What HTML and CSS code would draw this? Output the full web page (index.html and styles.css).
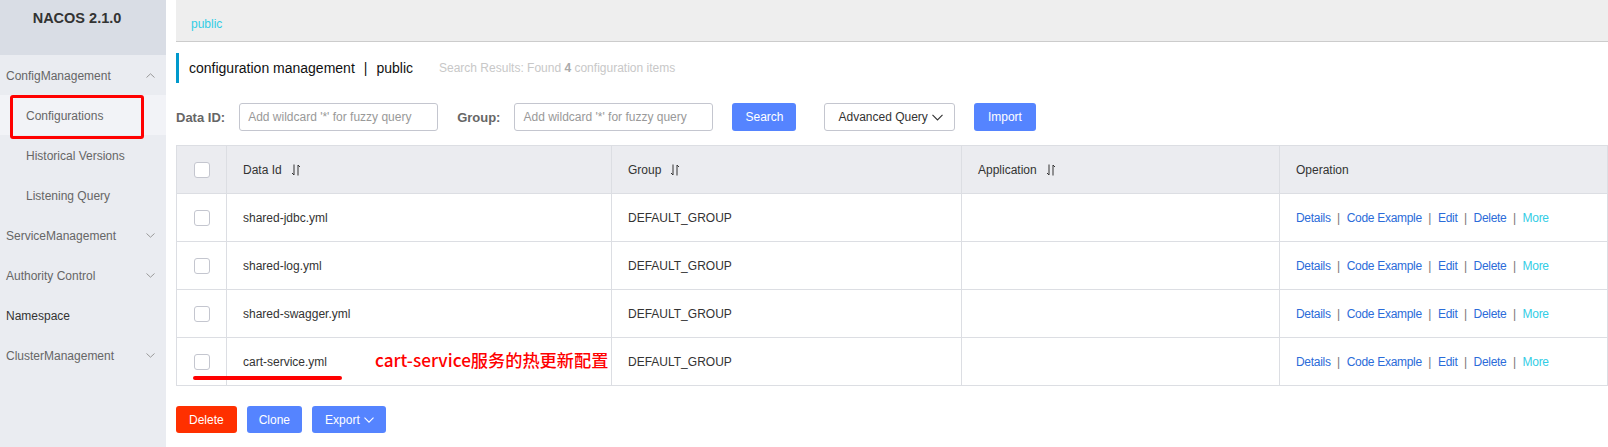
FILE: index.html
```html
<!DOCTYPE html>
<html lang="en">
<head>
<meta charset="utf-8">
<title>Nacos - Configurations</title>
<link rel="stylesheet" href="styles.css">
</head>
<body>
<div class="app">
  <aside class="sidebar">
    <div class="brand">NACOS 2.1.0</div>
    <nav class="menu">
      <div class="menu-row">
        <span>ConfigManagement</span>
        <svg class="chev" width="9" height="5" viewBox="0 0 9 5"><path d="M0.5 4.5 L4.5 0.8 L8.5 4.5" fill="none" stroke="#999" stroke-width="1"/></svg>
      </div>
      <div class="menu-row menu-sub active"><span>Configurations</span></div>
      <div class="menu-row menu-sub"><span>Historical Versions</span></div>
      <div class="menu-row menu-sub"><span>Listening Query</span></div>
      <div class="menu-row">
        <span>ServiceManagement</span>
        <svg class="chev" width="9" height="5" viewBox="0 0 9 5"><path d="M0.5 0.5 L4.5 4.2 L8.5 0.5" fill="none" stroke="#999" stroke-width="1"/></svg>
      </div>
      <div class="menu-row">
        <span>Authority Control</span>
        <svg class="chev" width="9" height="5" viewBox="0 0 9 5"><path d="M0.5 0.5 L4.5 4.2 L8.5 0.5" fill="none" stroke="#999" stroke-width="1"/></svg>
      </div>
      <div class="menu-row menu-link"><span>Namespace</span></div>
      <div class="menu-row">
        <span>ClusterManagement</span>
        <svg class="chev" width="9" height="5" viewBox="0 0 9 5"><path d="M0.5 0.5 L4.5 4.2 L8.5 0.5" fill="none" stroke="#999" stroke-width="1"/></svg>
      </div>
    </nav>
  </aside>

  <main class="main">
    <div class="topbar"><a href="#" class="ns-link">public</a></div>

    <div class="title-row">
      <h1 class="title">configuration management<span class="title-sep">|</span>public</h1>
      <span class="result">Search Results: Found <b>4</b> configuration items</span>
    </div>

    <form class="filters">
      <div class="field">
        <label class="field-label">Data ID:</label>
        <input class="field-input" type="text" placeholder="Add wildcard '*' for fuzzy query">
      </div>
      <div class="field">
        <label class="field-label">Group:</label>
        <input class="field-input" type="text" placeholder="Add wildcard '*' for fuzzy query">
      </div>
      <button type="button" class="btn btn-primary btn-search">Search</button>
      <button type="button" class="btn btn-normal btn-adv">Advanced Query
        <svg class="btn-chev" width="11" height="7" viewBox="0 0 11 7"><path d="M0.5 0.8 L5.5 6 L10.5 0.8" fill="none" stroke="#333" stroke-width="1.1"/></svg>
      </button>
      <button type="button" class="btn btn-primary btn-import">Import</button>
    </form>

    <table class="grid">
      <colgroup>
        <col class="c-check"><col class="c-id"><col class="c-group"><col class="c-app"><col>
      </colgroup>
      <thead>
        <tr>
          <th class="cell-check"><span class="checkbox"></span></th>
          <th>Data Id<svg class="sort" width="10" height="12" viewBox="0 0 10 12"><path d="M3 0.5 V11 L1 9" fill="none" stroke="#333" stroke-width="1"/><path d="M7 11.5 V1 L9 3" fill="none" stroke="#333" stroke-width="1"/></svg></th>
          <th>Group<svg class="sort" width="10" height="12" viewBox="0 0 10 12"><path d="M3 0.5 V11 L1 9" fill="none" stroke="#333" stroke-width="1"/><path d="M7 11.5 V1 L9 3" fill="none" stroke="#333" stroke-width="1"/></svg></th>
          <th>Application<svg class="sort" width="10" height="12" viewBox="0 0 10 12"><path d="M3 0.5 V11 L1 9" fill="none" stroke="#333" stroke-width="1"/><path d="M7 11.5 V1 L9 3" fill="none" stroke="#333" stroke-width="1"/></svg></th>
          <th>Operation</th>
        </tr>
      </thead>
      <tbody>
        <tr>
          <td class="cell-check"><span class="checkbox"></span></td>
          <td>shared-jdbc.yml</td>
          <td>DEFAULT_GROUP</td>
          <td></td>
          <td class="ops"><a href="#">Details</a><span class="op-sep">|</span><a href="#">Code Example</a><span class="op-sep">|</span><a href="#">Edit</a><span class="op-sep">|</span><a href="#">Delete</a><span class="op-sep">|</span><a href="#" class="more">More</a></td>
        </tr>
        <tr>
          <td class="cell-check"><span class="checkbox"></span></td>
          <td>shared-log.yml</td>
          <td>DEFAULT_GROUP</td>
          <td></td>
          <td class="ops"><a href="#">Details</a><span class="op-sep">|</span><a href="#">Code Example</a><span class="op-sep">|</span><a href="#">Edit</a><span class="op-sep">|</span><a href="#">Delete</a><span class="op-sep">|</span><a href="#" class="more">More</a></td>
        </tr>
        <tr>
          <td class="cell-check"><span class="checkbox"></span></td>
          <td>shared-swagger.yml</td>
          <td>DEFAULT_GROUP</td>
          <td></td>
          <td class="ops"><a href="#">Details</a><span class="op-sep">|</span><a href="#">Code Example</a><span class="op-sep">|</span><a href="#">Edit</a><span class="op-sep">|</span><a href="#">Delete</a><span class="op-sep">|</span><a href="#" class="more">More</a></td>
        </tr>
        <tr>
          <td class="cell-check mark-cell"><span class="checkbox"></span><span class="mark-line"></span></td>
          <td class="note-cell">cart-service.yml<span class="note">cart-service服务的热更新配置</span></td>
          <td>DEFAULT_GROUP</td>
          <td></td>
          <td class="ops"><a href="#">Details</a><span class="op-sep">|</span><a href="#">Code Example</a><span class="op-sep">|</span><a href="#">Edit</a><span class="op-sep">|</span><a href="#">Delete</a><span class="op-sep">|</span><a href="#" class="more">More</a></td>
        </tr>
      </tbody>
    </table>

    <div class="batch">
      <button type="button" class="btn btn-danger">Delete</button>
      <button type="button" class="btn btn-primary btn-clone">Clone</button>
      <button type="button" class="btn btn-primary btn-export">Export
        <svg class="btn-chev" width="10" height="6" viewBox="0 0 10 6"><path d="M0.5 0.6 L5 5.2 L9.5 0.6" fill="none" stroke="#fff" stroke-width="1.1"/></svg>
      </button>
    </div>
  </main>
</div>
</body>
</html>
```

FILE: styles.css
```css
* { box-sizing: border-box; }
html, body { margin: 0; padding: 0; }
body {
  font-family: "Liberation Sans", Arial, "Noto Sans CJK SC", sans-serif;
  font-size: 12px;
  color: #333;
  background: #fff;
}

.app { display: flex; height: 447px; overflow: hidden; }

/* sidebar */
.sidebar { width: 166px; flex: none; background: #eaecf1; }
.brand {
  height: 55px;
  background: #d9dde5;
  padding: 9px 12px 0 0;
  line-height: 18px;
  text-align: center;
  font-weight: bold;
  font-size: 14.5px;
  color: #333;
}
.menu-row {
  height: 40px;
  display: flex;
  align-items: center;
  justify-content: space-between;
  padding: 1px 11px 0 6px;
  color: #666;
}
.menu-sub { padding-left: 26px; }
.menu-sub.active { background: #f2f3f7; position: relative; }
.menu-sub.active::after {
  content: "";
  position: absolute;
  left: 10px;
  top: 0;
  width: 128px;
  height: 38px;
  border: 3px solid #f00;
  border-radius: 3px;
}
.menu-link { color: #333; }
.chev { flex: none; }

/* main */
.main { flex: 1; min-width: 0; padding-left: 10px; }
.topbar {
  height: 42px;
  background: #eee;
  border-bottom: 1px solid #ccc;
  padding: 6px 0 0 15px;
  display: flex;
  align-items: center;
}
.ns-link { color: #33cde5; text-decoration: none; }

.title-row {
  margin-top: 11px;
  height: 30px;
  border-left: 3px solid #09c;
  padding-left: 10px;
  display: flex;
  align-items: center;
}
.title { margin: 0; font-size: 14px; font-weight: normal; color: #111; }
.title-sep { margin: 0 9px; }
.result { margin-left: 26px; color: #c8c8c8; }
.result b { color: #aaa; }

.filters {
  margin: 20px 0 0;
  display: flex;
  align-items: center;
  height: 28px;
}
.field { display: flex; align-items: center; margin-right: 19px; }
.field-label {
  font-weight: bold;
  font-size: 13px;
  color: #666;
  padding-right: 14px;
}
.field-input {
  width: 199px;
  height: 28px;
  border: 1px solid #c4c6cf;
  border-radius: 3px;
  padding: 0 8px;
  font: 12px "Liberation Sans", Arial, sans-serif;
  color: #333;
  outline: none;
}
.field-input::placeholder { color: #999; }

.btn {
  height: 28px;
  border: 1px solid transparent;
  border-radius: 3px;
  padding: 0 12px;
  font: 12px "Liberation Sans", Arial, sans-serif;
  display: inline-flex;
  align-items: center;
  cursor: pointer;
}
.btn-primary { background: #5584ff; color: #fff; }
.btn-normal { background: #fff; border-color: #c4c6cf; color: #333; }
.btn-danger { background: #ff3000; color: #fff; }
.btn-search { padding: 0 12px; }
.btn-adv { margin-left: 28px; padding: 0 11px 0 13px; }
.btn-import { margin-left: 19px; padding: 0 13px; }
.btn-chev { margin-left: 4px; }

/* table */
.grid {
  margin-top: 14px;
  width: 100%;
  border-collapse: collapse;
  table-layout: fixed;
  border: 1px solid #dcdee3;
}
.c-check { width: 50px; }
.c-id { width: 385px; }
.c-group { width: 350px; }
.c-app { width: 318px; }
.grid tr { height: 48px; }
.grid th, .grid td {
  border: 1px solid #dcdee3;
  padding: 0 16px;
  text-align: left;
  font-weight: normal;
  color: #333;
  white-space: nowrap;
}
.grid th { background: #ebecf0; }
.grid .cell-check { padding: 0; text-align: center; }
.checkbox {
  display: inline-block;
  width: 16px;
  height: 16px;
  border: 1px solid #c4c6cf;
  border-radius: 3px;
  background: #fff;
  vertical-align: middle;
}
.sort { margin-left: 9px; vertical-align: -2px; }

.ops a { color: #2b6cd9; text-decoration: none; letter-spacing: -0.3px; }
.ops a.more { color: #33cde5; }
.op-sep { color: #777; margin: 0 6.5px; }

.mark-cell, .note-cell { position: relative; }
.mark-line {
  position: absolute;
  left: 16px;
  top: 38px;
  width: 149px;
  height: 4px;
  border-radius: 2px;
  background: #f00;
}
.note {
  position: absolute;
  left: 148px;
  top: 10px;
  font-family: "Noto Sans CJK SC", sans-serif;
  font-size: 17.2px;
  font-weight: 500;
  line-height: 24px;
  color: #f00;
}

.batch { margin-top: 20px; display: flex; gap: 10px; }
.batch .btn { height: 27px; }
.btn-clone { padding: 0 11px; }
.btn-export { padding: 0 11px 0 12px; }
```
